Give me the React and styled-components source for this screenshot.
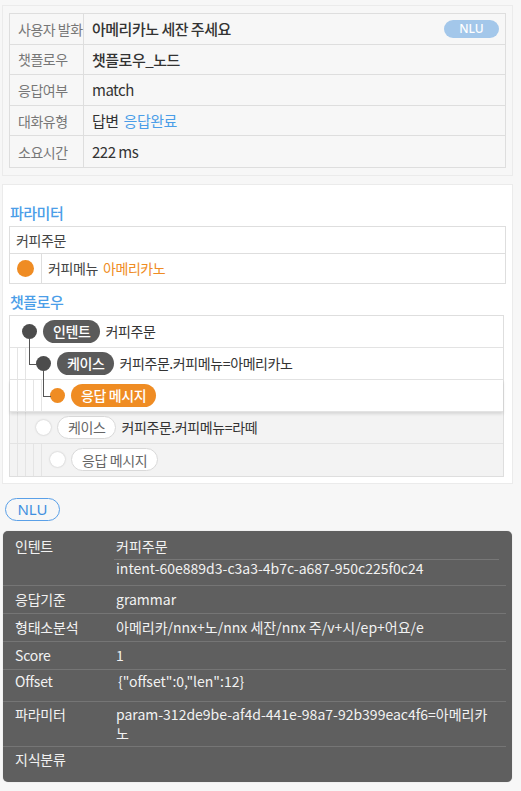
import React from "react";
import styled, { createGlobalStyle } from "styled-components";

const Global = createGlobalStyle`
  html, body { margin: 0; padding: 0; background: #f7f7f7; }
  body { font-family: "Noto Sans CJK KR", "Noto Sans", sans-serif; color: #333; }
  * { box-sizing: border-box; }
`;

const Page = styled.div`
  width: 521px;
  min-height: 791px;
  padding: 5px 8px 8px 2px;
  display: flex;
  flex-direction: column;
`;

const TopPanel = styled.div`
  border: 1px solid #ebebeb;
  background: #f7f7f7;
  padding: 7px 6px 7px 6px;
`;

const InfoTable = styled.div`
  border: 1px solid #dedede;
  display: grid;
  grid-template-columns: 74px 1fr;
`;

const InfoLabel = styled.div`
  height: 30.6px;
  display: flex;
  align-items: center;
  padding-left: 8px;
  font-size: 14px;
  letter-spacing: -0.5px;
  white-space: nowrap;
  color: #777;
  border-right: 1px solid #dedede;
  border-bottom: ${(p) => (p.$last ? "none" : "1px solid #dedede")};
`;

const InfoValue = styled.div`
  height: 30.6px;
  display: flex;
  align-items: center;
  justify-content: space-between;
  padding: 0 6px 0 8px;
  font-size: 15px;
  letter-spacing: -0.5px;
  color: #333;
  font-weight: ${(p) => (p.$strong ? 500 : 400)};
  border-bottom: ${(p) => (p.$last ? "none" : "1px solid #dedede")};
`;

const Link = styled.span`
  color: #4b9ee8;
  margin-left: 5px;
`;

const SoftBadge = styled.span`
  display: inline-flex;
  align-items: center;
  justify-content: center;
  width: 55px;
  height: 18px;
  border-radius: 9px;
  background: #a3c7ea;
  color: #fff;
  font-family: "Noto Sans", sans-serif;
  font-size: 12px;
  letter-spacing: 0;
`;

const FlowPanel = styled.div`
  margin-top: 8px;
  border: 1px solid #ebebeb;
  background: #fff;
  padding: 18px 6px 6px 6px;
`;

const Heading = styled.div`
  color: #4b9ee8;
  font-size: 15px;
  font-weight: 500;
  letter-spacing: -0.5px;
  line-height: 20px;
  margin: ${(p) => p.$m || "0"};
  padding-left: 1px;
`;

const ParamTable = styled.div`
  border: 1px solid #dedede;
`;

const ParamHead = styled.div`
  height: 27px;
  display: flex;
  align-items: center;
  padding-left: 6px;
  font-size: 14px;
  letter-spacing: -0.4px;
  color: #444;
  border-bottom: 1px solid #dedede;
`;

const ParamRow = styled.div`
  height: 29px;
  display: flex;
  align-items: center;
`;

const ParamDotCell = styled.div`
  width: 32px;
  height: 100%;
  border-right: 1px solid #dedede;
  display: flex;
  align-items: center;
  justify-content: center;
`;

const Dot = styled.span`
  width: 17px;
  height: 17px;
  border-radius: 50%;
  background: #ef8c23;
`;

const ParamText = styled.div`
  padding-left: 6px;
  font-size: 14px;
  letter-spacing: -0.4px;
  color: #444;
`;

const Orange = styled.span`
  color: #ef8c23;
  margin-left: 5px;
`;

const FlowTable = styled.div`
  border: 1px solid #dedede;
  margin-right: 2px;
`;

const FlowRow = styled.div`
  height: 32px;
  display: flex;
  align-items: center;
  background: ${(p) => (p.$muted ? "#f3f3f3" : "#fff")};
  border-bottom: ${(p) => (p.$last ? "none" : "1px solid #e3e3e3")};
  position: relative;
  z-index: ${(p) => (p.$raised ? 2 : "auto")};
  box-shadow: ${(p) => (p.$raised ? "0 2px 3px rgba(0,0,0,0.12)" : "none")};
`;

const Guides = styled.div`
  align-self: stretch;
  width: ${(p) => 12 + p.$level * 14}px;
  flex: none;
  background-image: repeating-linear-gradient(
    to right,
    transparent 0 7px,
    #e4e4e4 7px 8px
  );
  background-size: ${(p) => 1 + p.$level * 14 + 4}px 100%;
  background-repeat: no-repeat;
`;

const Node = styled.span`
  position: relative;
  width: 15px;
  height: 15px;
  flex: none;
  border-radius: 50%;
  background: ${(p) =>
    p.$tone === "orange" ? "#ef8c23" : p.$tone === "dark" ? "#4c4c4c" : "#fff"};
  box-shadow: ${(p) => (p.$tone === "off" ? "0 0 2px rgba(0,0,0,0.25)" : "none")};

  &::before {
    content: "";
    display: ${(p) => (p.$elbow ? "block" : "none")};
    position: absolute;
    left: -7.5px;
    top: -17px;
    width: 7.5px;
    height: 25px;
    border-left: 1.5px solid #555;
    border-bottom: 1.5px solid #555;
  }
`;

const Pill = styled.span`
  margin-left: 6px;
  height: 23px;
  padding: 0 10px;
  border-radius: 12px;
  display: inline-flex;
  align-items: center;
  font-size: 14px;
  letter-spacing: -0.4px;
  font-weight: ${(p) => (p.$tone === "off" ? 400 : 500)};
  color: ${(p) => (p.$tone === "off" ? "#666" : "#fff")};
  background: ${(p) =>
    p.$tone === "orange" ? "#ef8c23" : p.$tone === "dark" ? "#5a5a5a" : "#fff"};
  border: ${(p) => (p.$tone === "off" ? "1px solid #d9d9d9" : "none")};
`;

const FlowText = styled.span`
  margin-left: 5px;
  font-size: 14px;
  letter-spacing: -0.4px;
  color: #333;
`;

const OutlineBadge = styled.span`
  margin: 14px 0 10px 3px;
  align-self: flex-start;
  width: 55px;
  height: 23px;
  border: 1.5px solid #5aa0e8;
  border-radius: 12px;
  display: inline-flex;
  align-items: center;
  justify-content: center;
  color: #3f8fdf;
  font-family: "Noto Sans", sans-serif;
  font-size: 15px;
`;

const DarkPanel = styled.div`
  margin-left: 1px;
  margin-right: 1px;
  background: #5f5f5f;
  border-radius: 5px;
  padding: 0 0 10px 0;
  color: #f2f2f2;
  box-shadow: 0 0 1px rgba(0,0,0,0.3);
`;

const DarkRow = styled.div`
  display: grid;
  grid-template-columns: 101px 1fr;
  margin-right: 6px;
  padding: ${(p) => p.$pad || "5px 0 5px 12px"};
  border-bottom: ${(p) => (p.$last ? "none" : "1px solid #757575")};
  font-size: 14px;
  line-height: 17px;
`;

const DarkLabel = styled.div`
  font-weight: 400;
  letter-spacing: -0.2px;
  padding-top: ${(p) => p.$top || 0}px;
`;

const DarkValue = styled.div`
  padding-top: ${(p) => p.$top || 0}px;
  padding-left: ${(p) => p.$indent || 0}px;
  line-height: ${(p) => p.$lh || 17}px;
  white-space: nowrap;
`;

const SubLine = styled.div`
  border-top: 1px solid #777;
  margin: 4px 7px 0 -2px;
  padding-left: 2px;
  line-height: 17px;
`;

const info = [
  { label: "사용자 발화", value: "아메리카노 세잔 주세요", strong: true, badge: true },
  { label: "챗플로우", value: "챗플로우_노드", strong: true },
  { label: "응답여부", value: "match" },
  { label: "대화유형", value: "답변", link: "응답완료" },
  { label: "소요시간", value: "222 ms", last: true },
];

const flow = [
  { level: 0, tone: "dark", pill: "인텐트", text: "커피주문" },
  { level: 1, tone: "dark", pill: "케이스", text: "커피주문.커피메뉴=아메리카노", elbow: true },
  { level: 2, tone: "orange", pill: "응답 메시지", elbow: true, raised: true },
  { level: 1, tone: "off", pill: "케이스", text: "커피주문.커피메뉴=라떼", muted: true },
  { level: 2, tone: "off", pill: "응답 메시지", muted: true, last: true },
];

export default function App() {
  return (
    <>
      <Global />
      <Page>
        <TopPanel>
          <InfoTable>
            {info.map((r) => (
              <React.Fragment key={r.label}>
                <InfoLabel $last={r.last}>{r.label}</InfoLabel>
                <InfoValue $last={r.last} $strong={r.strong}>
                  <span>
                    {r.value}
                    {r.link && <Link>{r.link}</Link>}
                  </span>
                  {r.badge && <SoftBadge>NLU</SoftBadge>}
                </InfoValue>
              </React.Fragment>
            ))}
          </InfoTable>
        </TopPanel>

        <FlowPanel>
          <Heading $m="0 0 3px 0">파라미터</Heading>
          <ParamTable>
            <ParamHead>커피주문</ParamHead>
            <ParamRow>
              <ParamDotCell>
                <Dot />
              </ParamDotCell>
              <ParamText>
                커피메뉴<Orange>아메리카노</Orange>
              </ParamText>
            </ParamRow>
          </ParamTable>

          <Heading $m="8px 0 3px 0">챗플로우</Heading>
          <FlowTable>
            {flow.map((r, i) => (
              <FlowRow key={i} $muted={r.muted} $last={r.last} $raised={r.raised}>
                <Guides $level={r.level} />
                <Node $tone={r.tone} $elbow={r.elbow} />
                <Pill $tone={r.tone}>{r.pill}</Pill>
                {r.text && <FlowText>{r.text}</FlowText>}
              </FlowRow>
            ))}
          </FlowTable>
        </FlowPanel>

        <OutlineBadge>NLU</OutlineBadge>

        <DarkPanel>
          <DarkRow $pad="7px 0 8px 12px">
            <DarkLabel>인텐트</DarkLabel>
            <DarkValue>
              커피주문
              <SubLine>intent-60e889d3-c3a3-4b7c-a687-950c225f0c24</SubLine>
            </DarkValue>
          </DarkRow>
          <DarkRow>
            <DarkLabel>응답기준</DarkLabel>
            <DarkValue>grammar</DarkValue>
          </DarkRow>
          <DarkRow>
            <DarkLabel>형태소분석</DarkLabel>
            <DarkValue>아메리카/nnx+노/nnx 세잔/nnx 주/v+시/ep+어요/e</DarkValue>
          </DarkRow>
          <DarkRow>
            <DarkLabel>Score</DarkLabel>
            <DarkValue>1</DarkValue>
          </DarkRow>
          <DarkRow $pad="3px 0 11px 12px">
            <DarkLabel>Offset</DarkLabel>
            <DarkValue $indent={2}>{'{"offset":0,"len":12}'}</DarkValue>
          </DarkRow>
          <DarkRow $pad="3px 0 3px 12px">
            <DarkLabel $top={1}>파라미터</DarkLabel>
            <DarkValue $lh={19}>
              param-312de9be-af4d-441e-98a7-92b399eac4f6=아메리카
              <br />노
            </DarkValue>
          </DarkRow>
          <DarkRow $last $pad="4px 0 4px 12px">
            <DarkLabel>지식분류</DarkLabel>
            <DarkValue />
          </DarkRow>
        </DarkPanel>
      </Page>
    </>
  );
}
